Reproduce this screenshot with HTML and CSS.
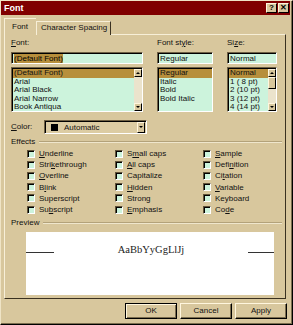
FILE: index.html
```html
<!DOCTYPE html>
<html>
<head>
<meta charset="utf-8">
<title>Font</title>
<link rel="stylesheet" href="styles.css">
</head>
<body>
<div class="dialog">
  <div class="titlebar">
    <span class="title">Font</span>
    <div class="tbtns">
      <span class="tbtn">?</span>
      <span class="tbtn">✕</span>
    </div>
  </div>

  <div class="tabs">
    <div class="tab active">Font</div>
    <div class="tab">Character Spacing</div>
  </div>

  <div class="panel">
    <div class="fontgrid">
      <div class="fcol">
        <div class="lbl"><u>F</u>ont:</div>
        <div class="input"><span class="seltext">(Default Font)</span></div>
        <div class="list">
          <div class="items">
            <div class="item selected">(Default Font)</div>
            <div class="item">Arial</div>
            <div class="item">Arial Black</div>
            <div class="item">Arial Narrow</div>
            <div class="item">Book Antiqua</div>
          </div>
          <div class="scroll">
            <div class="sbtn"><span class="arrow up"></span></div>
            <div class="track"></div>
            <div class="sbtn"><span class="arrow down"></span></div>
          </div>
        </div>
      </div>

      <div class="fcol">
        <div class="lbl">Font st<u>y</u>le:</div>
        <div class="input">Regular</div>
        <div class="list">
          <div class="items">
            <div class="item selected">Regular</div>
            <div class="item">Italic</div>
            <div class="item">Bold</div>
            <div class="item">Bold Italic</div>
          </div>
        </div>
      </div>

      <div class="fcol">
        <div class="lbl">Si<u>z</u>e:</div>
        <div class="input">Normal</div>
        <div class="list">
          <div class="items">
            <div class="item selected">Normal</div>
            <div class="item">1 ( 8 pt)</div>
            <div class="item">2 (10 pt)</div>
            <div class="item">3 (12 pt)</div>
            <div class="item">4 (14 pt)</div>
          </div>
          <div class="scroll">
            <div class="sbtn"><span class="arrow up"></span></div>
            <div class="thumb"></div>
            <div class="track"></div>
            <div class="sbtn"><span class="arrow down"></span></div>
          </div>
        </div>
      </div>
    </div>

    <div class="colorrow">
      <div class="lbl colorlbl"><u>C</u>olor:</div>
      <div class="combo">
        <span class="swatch"></span>
        <span class="combotext">Automatic</span>
        <span class="combobtn"><span class="arrow down"></span></span>
      </div>
    </div>

    <div class="group"><span>Effects</span><span class="etch"></span></div>

    <div class="effects">
      <label class="chk"><span class="box"></span><span><u>U</u>nderline</span></label>
      <label class="chk"><span class="box"></span><span>S<u>m</u>all caps</span></label>
      <label class="chk"><span class="box"></span><span><u>S</u>ample</span></label>

      <label class="chk"><span class="box"></span><span>Stri<u>k</u>ethrough</span></label>
      <label class="chk"><span class="box"></span><span><u>A</u>ll caps</span></label>
      <label class="chk"><span class="box"></span><span>Defi<u>n</u>ition</span></label>

      <label class="chk"><span class="box"></span><span><u>O</u>verline</span></label>
      <label class="chk"><span class="box"></span><span>Capitalize</span></label>
      <label class="chk"><span class="box"></span><span>Ci<u>t</u>ation</span></label>

      <label class="chk"><span class="box"></span><span>B<u>l</u>ink</span></label>
      <label class="chk"><span class="box"></span><span><u>H</u>idden</span></label>
      <label class="chk"><span class="box"></span><span><u>V</u>ariable</span></label>

      <label class="chk"><span class="box"></span><span>Superscript</span></label>
      <label class="chk"><span class="box"></span><span>Strong</span></label>
      <label class="chk"><span class="box"></span><span>Keyboard</span></label>

      <label class="chk"><span class="box"></span><span>Su<u>b</u>script</span></label>
      <label class="chk"><span class="box"></span><span><u>E</u>mphasis</span></label>
      <label class="chk"><span class="box"></span><span>Co<u>d</u>e</span></label>
    </div>

    <div class="group preview-lbl"><span>Preview</span><span class="etch"></span></div>

    <div class="preview">
      <div class="prow">
        <span class="pline left"></span>
        <span class="ptext">AaBbYyGgLlJj</span>
        <span class="pline right"></span>
      </div>
    </div>
  </div>

  <div class="buttons">
    <div class="btn default">OK</div>
    <div class="btn">Cancel</div>
    <div class="btn">Apply</div>
  </div>
</div>
</body>
</html>
```

FILE: styles.css
```css
* { box-sizing: border-box; }

html, body {
  margin: 0;
  padding: 0;
  background: #d8c79d;
}

body {
  font-family: "Liberation Sans", Arial, sans-serif;
  font-size: 8px;
  color: #111;
}

u { text-decoration: underline; text-underline-offset: 1px; }

.dialog {
  width: 293px;
  height: 325px;
  background: #d8c79d;
  border: 1px solid;
  border-color: #efe4c6 #000 #000 #efe4c6;
  box-shadow: inset -1px -1px 0 #7b6d4e;
  padding: 0 2px 2px 0;
  display: flex;
  flex-direction: column;
}

/* ---------- title bar ---------- */
.titlebar {
  height: 14px;
  background: #800000;
  color: #fff;
  display: flex;
  align-items: center;
  justify-content: space-between;
  padding: 0 1px 0 3px;
}

.title {
  font-weight: bold;
  font-size: 9px;
}

.tbtns {
  display: flex;
  gap: 1px;
}

.tbtn {
  width: 11px;
  height: 10px;
  background: #d8c79d;
  color: #000;
  font-weight: bold;
  font-size: 8px;
  line-height: 8px;
  text-align: center;
  border: 1px solid;
  border-color: #fff6de #000 #000 #fff6de;
}

/* ---------- tabs ---------- */
.tabs {
  display: flex;
  align-items: flex-end;
  height: 20px;
  padding-left: 3px;
  margin-bottom: -1px;
  position: relative;
  z-index: 1;
}

.tab {
  height: 14px;
  line-height: 12px;
  padding: 0 3px 0 4px;
  border: 1px solid;
  border-bottom: none;
  border-color: #f7efd8 #3a3120 transparent #f7efd8;
  background: #d8c79d;
}

.tab.active {
  height: 17px;
  line-height: 15px;
  width: 32px;
  padding-left: 7px;
  border-right: none;
}

/* ---------- panel ---------- */
.panel {
  margin-left: 3px;
  width: 282px;
  height: 265px;
  border: 1px solid;
  border-color: #f7efd8 #3a3120 #3a3120 #f7efd8;
  padding: 3px 0 0 6px;
  display: flex;
  flex-direction: column;
}

.lbl {
  height: 10px;
  line-height: 10px;
}

.fontgrid {
  display: grid;
  grid-template-columns: 132px 56px 50px;
  column-gap: 14px;
}

.fcol {
  display: flex;
  flex-direction: column;
}

.input {
  margin-top: 4px;
  height: 12px;
  line-height: 9px;
  background: #ccf3dc;
  border: 1px solid;
  border-color: #6e6044 #fff #fff #6e6044;
  box-shadow: inset 1px 1px 0 #000;
  padding: 1px 2px 0 2px;
  white-space: nowrap;
  overflow: hidden;
}

.seltext {
  background: #b78f3c;
  color: #000;
}

.list {
  margin-top: 3px;
  height: 45px;
  background: #ccf3dc;
  border: 1px solid;
  border-color: #6e6044 #fff #fff #6e6044;
  box-shadow: inset 1px 1px 0 #000;
  padding: 1px 0 0 1px;
  display: flex;
  overflow: hidden;
}

.items {
  flex: 1;
  min-width: 0;
}

.item {
  height: 8.6px;
  line-height: 8.6px;
  padding-left: 1px;
  white-space: pre;
  overflow: hidden;
}

.item.selected {
  background: #b78f3c;
}

.scroll {
  width: 8px;
  display: flex;
  flex-direction: column;
}

.sbtn, .thumb {
  height: 8px;
  background: #d8c79d;
  border: 1px solid;
  border-color: #fff6de #000 #000 #fff6de;
  display: flex;
  align-items: center;
  justify-content: center;
}

.thumb {
  height: 12px;
}

.track {
  flex: 1;
  background: #ebe3cc;
}

.arrow {
  width: 0;
  height: 0;
  border-left: 2px solid transparent;
  border-right: 2px solid transparent;
}

.arrow.up { border-bottom: 2px solid #000; }
.arrow.down { border-top: 2px solid #000; }

/* ---------- color ---------- */
.colorrow {
  margin-top: 8px;
  display: flex;
  align-items: center;
  height: 14px;
}

.colorlbl {
  width: 33px;
}

.combo {
  width: 103px;
  height: 14px;
  border: 1px solid;
  border-color: #6e6044 #fff #fff #6e6044;
  box-shadow: inset 1px 1px 0 #000;
  background: #dccca3;
  display: flex;
  align-items: center;
  padding: 1px 1px 1px 6px;
}

.swatch {
  width: 7px;
  height: 7px;
  background: #000;
}

.combotext {
  margin-left: 6px;
  flex: 1;
}

.combobtn {
  width: 8px;
  height: 11px;
  background: #d8c79d;
  border: 1px solid;
  border-color: #fff6de #000 #000 #fff6de;
  display: flex;
  align-items: center;
  justify-content: center;
}

/* ---------- groups ---------- */
.group {
  margin-top: 3px;
  height: 10px;
  line-height: 10px;
  display: flex;
  align-items: center;
  padding-right: 3px;
}

.etch {
  flex: 1;
  margin-left: 4px;
  height: 2px;
  border-top: 1px solid #b3a27a;
  border-bottom: 1px solid #efe6cc;
}

.effects {
  margin-top: 1px;
  margin-left: 16px;
  display: grid;
  grid-template-columns: 88px 88px 80px;
  grid-auto-rows: 11.2px;
}

.chk {
  display: flex;
  align-items: center;
  white-space: nowrap;
}

.box {
  width: 8px;
  height: 8px;
  margin-right: 4px;
  background: #ccf3dc;
  border: 1px solid;
  border-color: #5f5238 #fff #fff #5f5238;
  box-shadow: inset 1px 1px 0 #000;
  flex: none;
}

.preview-lbl {
  margin-top: 3px;
}

/* ---------- preview ---------- */
.preview {
  margin-top: 4px;
  margin-left: 15px;
  width: 248px;
  height: 63px;
  background: #fff;
  padding-top: 12px;
}

.prow {
  display: flex;
  align-items: flex-end;
  justify-content: space-between;
}

.pline {
  height: 1px;
  background: #333;
  margin-bottom: 2px;
}

.pline.left { width: 28px; }
.pline.right { width: 26px; }

.ptext {
  font-family: "Liberation Serif", "Times New Roman", serif;
  font-size: 10.5px;
  line-height: 11px;
  color: #222;
}

/* ---------- buttons ---------- */
.buttons {
  margin-top: 4px;
  display: flex;
  justify-content: flex-end;
  gap: 3px;
  padding-right: 3px;
}

.btn {
  width: 52px;
  height: 16px;
  line-height: 13px;
  text-align: center;
  border: 1px solid;
  border-color: #fff6de #000 #000 #fff6de;
  box-shadow: inset -1px -1px 0 #7b6d4e;
}

.btn.default {
  border-color: #000;
  box-shadow: inset 1px 1px 0 #fff6de, inset -1px -1px 0 #7b6d4e;
}
```
